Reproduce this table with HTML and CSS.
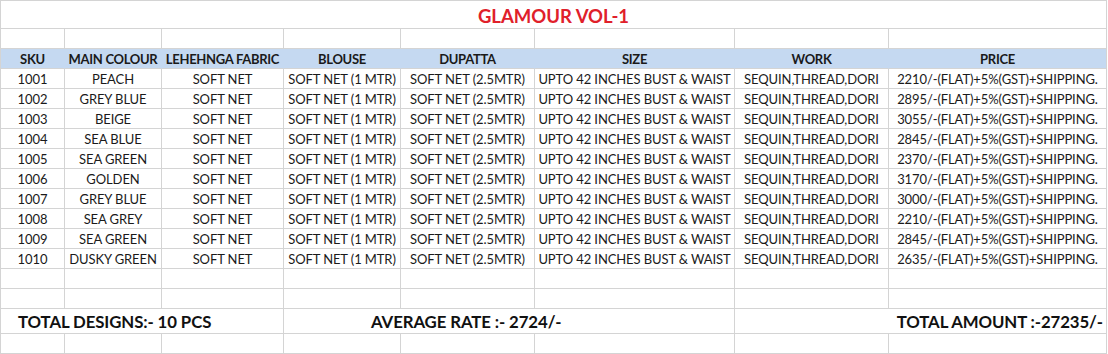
FILE: index.html
```html
<!DOCTYPE html>
<html>
<head>
<meta charset="utf-8">
<link rel="stylesheet" href="styles.css">
</head>
<body>
<div class="sheet">
  <div class="cell title">GLAMOUR VOL-1</div>

  <div class="cell"></div><div class="cell"></div><div class="cell"></div><div class="cell"></div>
  <div class="cell"></div><div class="cell"></div><div class="cell"></div><div class="cell"></div>

  <div class="cell hd">SKU</div>
  <div class="cell hd">MAIN COLOUR</div>
  <div class="cell hd">LEHEHNGA FABRIC</div>
  <div class="cell hd">BLOUSE</div>
  <div class="cell hd">DUPATTA</div>
  <div class="cell hd">SIZE</div>
  <div class="cell hd">WORK</div>
  <div class="cell hd last">PRICE</div>

  <div class="cell">1001</div><div class="cell">PEACH</div><div class="cell">SOFT NET</div><div class="cell">SOFT NET (1 MTR)</div><div class="cell">SOFT NET (2.5MTR)</div><div class="cell">UPTO 42 INCHES BUST &amp; WAIST</div><div class="cell">SEQUIN,THREAD,DORI</div><div class="cell">2210/-(FLAT)+5%(GST)+SHIPPING.</div>
  <div class="cell">1002</div><div class="cell">GREY BLUE</div><div class="cell">SOFT NET</div><div class="cell">SOFT NET (1 MTR)</div><div class="cell">SOFT NET (2.5MTR)</div><div class="cell">UPTO 42 INCHES BUST &amp; WAIST</div><div class="cell">SEQUIN,THREAD,DORI</div><div class="cell">2895/-(FLAT)+5%(GST)+SHIPPING.</div>
  <div class="cell">1003</div><div class="cell">BEIGE</div><div class="cell">SOFT NET</div><div class="cell">SOFT NET (1 MTR)</div><div class="cell">SOFT NET (2.5MTR)</div><div class="cell">UPTO 42 INCHES BUST &amp; WAIST</div><div class="cell">SEQUIN,THREAD,DORI</div><div class="cell">3055/-(FLAT)+5%(GST)+SHIPPING.</div>
  <div class="cell">1004</div><div class="cell">SEA BLUE</div><div class="cell">SOFT NET</div><div class="cell">SOFT NET (1 MTR)</div><div class="cell">SOFT NET (2.5MTR)</div><div class="cell">UPTO 42 INCHES BUST &amp; WAIST</div><div class="cell">SEQUIN,THREAD,DORI</div><div class="cell">2845/-(FLAT)+5%(GST)+SHIPPING.</div>
  <div class="cell">1005</div><div class="cell">SEA GREEN</div><div class="cell">SOFT NET</div><div class="cell">SOFT NET (1 MTR)</div><div class="cell">SOFT NET (2.5MTR)</div><div class="cell">UPTO 42 INCHES BUST &amp; WAIST</div><div class="cell">SEQUIN,THREAD,DORI</div><div class="cell">2370/-(FLAT)+5%(GST)+SHIPPING.</div>
  <div class="cell">1006</div><div class="cell">GOLDEN</div><div class="cell">SOFT NET</div><div class="cell">SOFT NET (1 MTR)</div><div class="cell">SOFT NET (2.5MTR)</div><div class="cell">UPTO 42 INCHES BUST &amp; WAIST</div><div class="cell">SEQUIN,THREAD,DORI</div><div class="cell">3170/-(FLAT)+5%(GST)+SHIPPING.</div>
  <div class="cell">1007</div><div class="cell">GREY BLUE</div><div class="cell">SOFT NET</div><div class="cell">SOFT NET (1 MTR)</div><div class="cell">SOFT NET (2.5MTR)</div><div class="cell">UPTO 42 INCHES BUST &amp; WAIST</div><div class="cell">SEQUIN,THREAD,DORI</div><div class="cell">3000/-(FLAT)+5%(GST)+SHIPPING.</div>
  <div class="cell">1008</div><div class="cell">SEA GREY</div><div class="cell">SOFT NET</div><div class="cell">SOFT NET (1 MTR)</div><div class="cell">SOFT NET (2.5MTR)</div><div class="cell">UPTO 42 INCHES BUST &amp; WAIST</div><div class="cell">SEQUIN,THREAD,DORI</div><div class="cell">2210/-(FLAT)+5%(GST)+SHIPPING.</div>
  <div class="cell">1009</div><div class="cell">SEA GREEN</div><div class="cell">SOFT NET</div><div class="cell">SOFT NET (1 MTR)</div><div class="cell">SOFT NET (2.5MTR)</div><div class="cell">UPTO 42 INCHES BUST &amp; WAIST</div><div class="cell">SEQUIN,THREAD,DORI</div><div class="cell">2845/-(FLAT)+5%(GST)+SHIPPING.</div>
  <div class="cell">1010</div><div class="cell">DUSKY GREEN</div><div class="cell">SOFT NET</div><div class="cell">SOFT NET (1 MTR)</div><div class="cell">SOFT NET (2.5MTR)</div><div class="cell">UPTO 42 INCHES BUST &amp; WAIST</div><div class="cell">SEQUIN,THREAD,DORI</div><div class="cell">2635/-(FLAT)+5%(GST)+SHIPPING.</div>

  <div class="cell"></div><div class="cell"></div><div class="cell"></div><div class="cell"></div>
  <div class="cell"></div><div class="cell"></div><div class="cell"></div><div class="cell"></div>
  <div class="cell"></div><div class="cell"></div><div class="cell"></div><div class="cell"></div>
  <div class="cell"></div><div class="cell"></div><div class="cell"></div><div class="cell"></div>

  <div class="cell total t1">TOTAL DESIGNS:- 10 PCS</div>
  <div class="cell total t2">AVERAGE RATE :- 2724/-</div>
  <div class="cell total t3">TOTAL AMOUNT :-27235/-</div>

  <div class="cell"></div><div class="cell"></div><div class="cell"></div><div class="cell"></div>
  <div class="cell"></div><div class="cell"></div><div class="cell"></div><div class="cell"></div>
</div>
</body>
</html>
```
FILE: styles.css
```css
html, body {
  margin: 0;
  padding: 0;
  background: #ffffff;
}

.sheet {
  display: grid;
  grid-template-columns: 64px 97px 122px 117px 134px 200px 154px 218px;
  grid-template-rows: 28px 20px 20px repeat(10, 20px) 20px 20px 25px 20px;
  width: max-content;
  border-left: 1px solid #d4d4d4;
  border-top: 1px solid #d4d4d4;
  font-family: Lato, "Open Sans", sans-serif;
  font-size: 13px;
  letter-spacing: -0.1px;
  color: #1a1a1a;
}

.cell {
  box-sizing: border-box;
  border-right: 1px solid #d4d4d4;
  border-bottom: 1px solid #d4d4d4;
  display: flex;
  align-items: center;
  justify-content: center;
  white-space: nowrap;
  padding-top: 1px;
}

.title {
  grid-column: 1 / -1;
  color: #e0202a;
  font-weight: bold;
  font-size: 18.5px;
  letter-spacing: 0;
  padding-top: 2px;
}

.hd {
  background: #c5d9f1;
  font-weight: bold;
  letter-spacing: -0.3px;
  border-right-color: transparent;
}

.hd.last {
  border-right-color: #d4d4d4;
}

.total {
  font-weight: bold;
  font-size: 16.8px;
  letter-spacing: -0.1px;
  color: #111111;
  justify-content: flex-start;
}

.t1 {
  grid-column: 1 / 4;
  padding-left: 17px;
}

.t2 {
  grid-column: 4 / 7;
  padding-left: 87px;
}

.t3 {
  grid-column: 7 / 9;
  justify-content: flex-end;
  padding-right: 3px;
}
```
